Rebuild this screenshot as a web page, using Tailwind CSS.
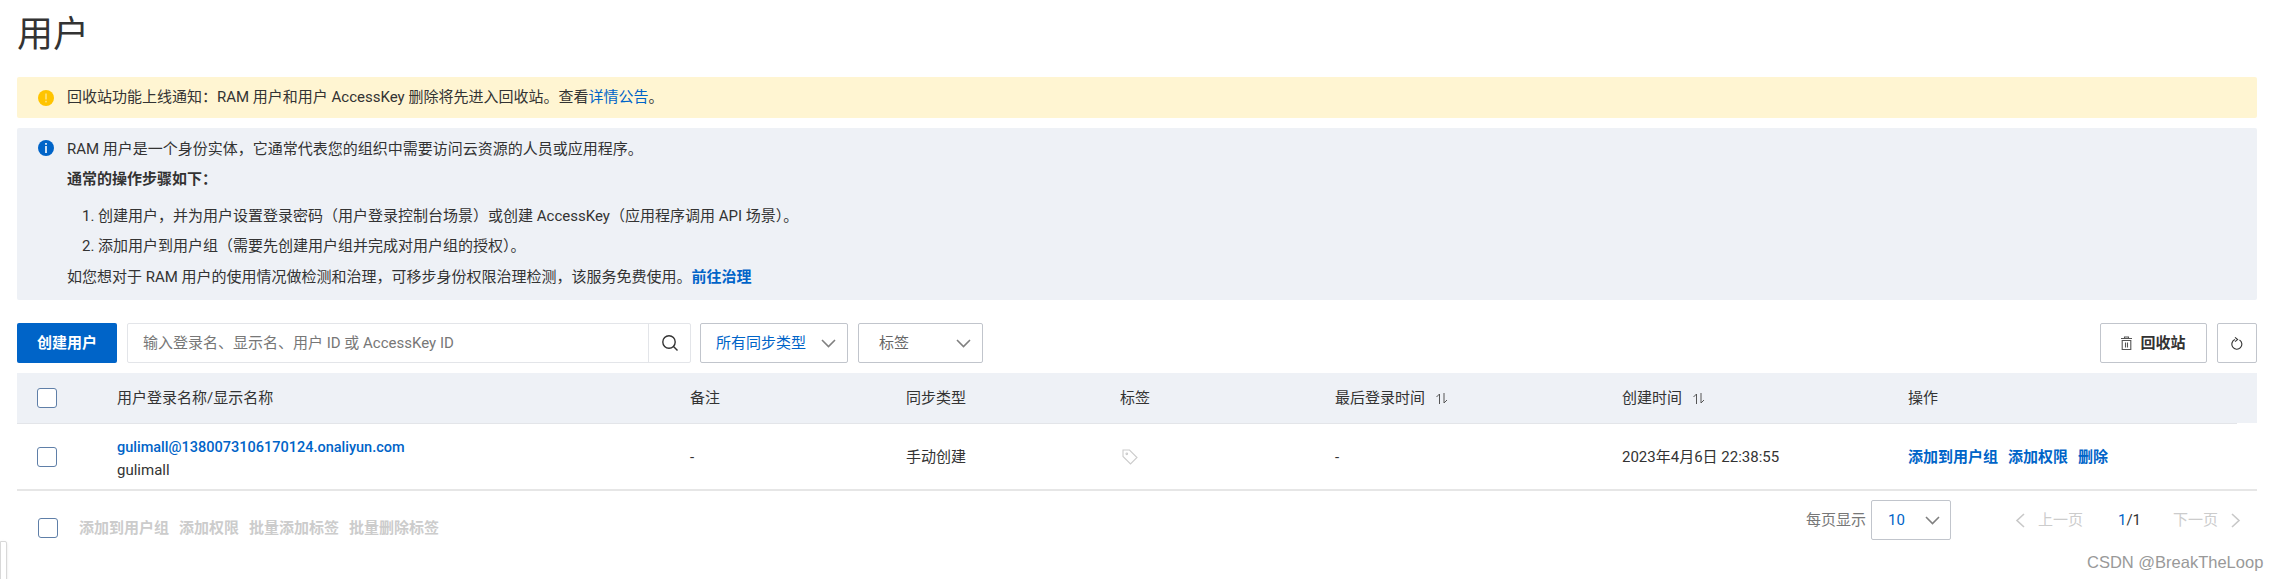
<!DOCTYPE html>
<html lang="zh-CN">
<head>
  <meta charset="UTF-8" />
  <title>用户</title>
  <script src="https://cdn.jsdelivr.net/npm/@tailwindcss/browser@4"></script>
</head>
<body class="bg-white h-[579px] overflow-hidden relative font-['Roboto','Noto_Sans_CJK_SC',sans-serif] text-[15px] text-[#333]">

  <div class="pl-[17px] pr-[23px]">
    <!-- title -->
    <h1 class="h-[77px] pt-[11px] text-[36px] leading-[48px] font-normal text-[#333]">用户</h1>

    <!-- recycle notice -->
    <div class="h-[41px] rounded-[2px] bg-[#fff5d2] pl-[21px] flex items-center gap-[13px]">
      <svg class="w-4 h-4 shrink-0" viewBox="0 0 16 16"><circle cx="8" cy="8" r="8" fill="#ffc400"/><rect x="7.2" y="3.5" width="1.6" height="6" fill="#ffe27a"/><rect x="7.2" y="10.8" width="1.6" height="1.6" fill="#ffe27a"/></svg>
      <p>回收站功能上线通知：RAM 用户和用户 AccessKey 删除将先进入回收站。查看<a class="text-[#0064c8]">详情公告</a>。</p>
    </div>

    <!-- intro -->
    <div class="mt-[10px] h-[172px] rounded-[2px] bg-[#eef1f6] pl-[21px] pt-[12px] flex gap-[13px]">
      <svg class="w-4 h-4 shrink-0" viewBox="0 0 16 16"><circle cx="8" cy="8" r="8" fill="#0064c8"/><rect x="7.2" y="3" width="1.6" height="1.8" fill="#fff"/><rect x="7.2" y="6" width="1.6" height="7" fill="#fff"/></svg>
      <div class="-mt-[2px]">
        <p class="leading-[22px]">RAM 用户是一个身份实体，它通常代表您的组织中需要访问云资源的人员或应用程序。</p>
        <p class="leading-[22px] mt-[8px] font-bold">通常的操作步骤如下：</p>
        <ol class="pl-[15px] mt-[15px] flex flex-col gap-[8px]">
          <li class="leading-[22px]">1. 创建用户，并为用户设置登录密码（用户登录控制台场景）或创建 AccessKey（应用程序调用 API 场景）。</li>
          <li class="leading-[22px]">2. 添加用户到用户组（需要先创建用户组并完成对用户组的授权）。</li>
        </ol>
        <p class="leading-[22px] mt-[9px]">如您想对于 RAM 用户的使用情况做检测和治理，可移步身份权限治理检测，该服务免费使用。<a class="text-[#0064c8] font-bold">前往治理</a></p>
      </div>
    </div>

    <!-- toolbar -->
    <div class="mt-[23px] h-[40px] flex items-stretch gap-[10px]">
      <button class="w-[100px] rounded-[2px] bg-[#0064c8] text-white font-bold">创建用户</button>
      <div class="w-[564px] flex border border-[#e3e5e9] rounded-[2px]">
        <div class="flex-1 pl-[15px] flex items-center text-[#777]">输入登录名、显示名、用户 ID 或 AccessKey ID</div>
        <div class="w-[42px] border-l border-[#e3e5e9] flex items-center justify-center">
          <svg class="w-[18px] h-[18px]" viewBox="0 0 18 18" fill="none" stroke="#333" stroke-width="1.4"><circle cx="8" cy="8" r="6.2"/><path d="M12.5 12.5 16.5 16.5"/></svg>
        </div>
      </div>
      <div class="-ml-px w-[148px] border border-[#c1c5cc] rounded-[2px] pl-[15px] pr-[11px] flex items-center justify-between text-[#0064c8]">
        <span>所有同步类型</span>
        <svg class="w-[15px] h-[9px]" viewBox="0 0 15 9" fill="none" stroke="#808080" stroke-width="1.6"><path d="M1 1 7.5 7.5 14 1"/></svg>
      </div>
      <div class="w-[125px] border border-[#c1c5cc] rounded-[2px] pl-[20px] pr-[11px] flex items-center justify-between text-[#666]">
        <span>标签</span>
        <svg class="w-[15px] h-[9px]" viewBox="0 0 15 9" fill="none" stroke="#808080" stroke-width="1.6"><path d="M1 1 7.5 7.5 14 1"/></svg>
      </div>
      <div class="ml-auto w-[107px] border border-[#c1c5cc] rounded-[2px] flex items-center justify-center gap-[8px] font-bold">
        <svg class="w-[11px] h-[14px]" viewBox="0 0 11 14" fill="none" stroke="#555" stroke-width="1.1"><path d="M0 2.5h11M3.5 2.5V1h4v1.5M1.2 4.5h8.6v9H1.2zM4.5 6.5v5M6.5 6.5v5"/></svg>
        <span>回收站</span>
      </div>
      <div class="w-[40px] border border-[#c1c5cc] rounded-[2px] flex items-center justify-center">
        <svg class="w-[12px] h-[13px]" viewBox="0 0 12 13" fill="none" stroke="#333" stroke-width="1.1"><path d="M8.5 3A5 5 0 1 1 4 2.6"/><path d="M4 .4 6.6 2.6 4 4.6" /></svg>
      </div>
    </div>

    <!-- table head -->
    <div class="mt-[10px] h-[50px] bg-[#eef1f6] grid grid-cols-[100px_573px_216px_214px_215px_287px_286px_1fr] items-center">
      <span class="ml-[20px] w-5 h-5 bg-white border border-[#5f7fa8] rounded-[3px]"></span>
      <span>用户登录名称/显示名称</span>
      <span>备注</span>
      <span>同步类型</span>
      <span>标签</span>
      <span class="flex items-center gap-[11px]">最后登录时间
        <svg class="w-[12px] h-[11px]" viewBox="0 0 12 11" fill="none" stroke="#555"><path d="M3.5 11V1L.5 4M8 0v10l3-3"/></svg>
      </span>
      <span class="flex items-center gap-[11px]">创建时间
        <svg class="w-[12px] h-[11px]" viewBox="0 0 12 11" fill="none" stroke="#555"><path d="M3.5 11V1L.5 4M8 0v10l3-3"/></svg>
      </span>
      <span>操作</span>
    </div>
    <div class="h-px w-[2220px] bg-[#e3e5e9]"></div>

    <!-- row -->
    <div class="h-[67px] border-b-2 border-[#e6e6e6] grid grid-cols-[100px_573px_216px_214px_215px_287px_286px_1fr] items-center">
      <span class="ml-[20px] w-5 h-5 border border-[#5f7fa8] rounded-[3px]"></span>
      <div class="flex flex-col pt-[5px]">
        <a class="text-[#0064c8] font-medium text-[14.5px] leading-[23px]">gulimall@1380073106170124.onaliyun.com</a>
        <span class="leading-[23px]">gulimall</span>
      </div>
      <span class="pt-[2px]">-</span>
      <span class="pt-[2px]">手动创建</span>
      <svg class="ml-[2px] w-4 h-4" viewBox="0 0 16 16" fill="none" stroke="#ccc" stroke-width="1.1"><path d="M1 1h6.5l7.5 7.5-6.5 6.5L1 7.5z"/><circle cx="4.8" cy="4.8" r=".8"/></svg>
      <span class="pt-[2px]">-</span>
      <span class="pt-[2px]">2023年4月6日 22:38:55</span>
      <div class="pt-[2px] flex gap-[10px] text-[#0064c8] font-bold">
        <a>添加到用户组</a><a>添加权限</a><a>删除</a>
      </div>
    </div>

    <!-- footer -->
    <div class="h-[50px] flex items-start">
      <div class="flex items-center h-[20px] mt-[27px]">
        <span class="ml-[21px] w-5 h-5 border border-[#5f7fa8] rounded-[3px]"></span>
        <div class="ml-[21px] flex gap-[10px] text-[#cccccc] font-bold">
          <span>添加到用户组</span><span>添加权限</span><span>批量添加标签</span><span>批量删除标签</span>
        </div>
      </div>
      <div class="ml-auto mr-[16px] mt-[9px] h-[40px] flex items-center">
        <span class="text-[#777] mr-[5px]">每页显示</span>
        <div class="w-[80px] h-[40px] border border-[#c1c5cc] rounded-[2px] pl-[16px] pr-[10px] flex items-center justify-between text-[#0064c8]">
          <span>10</span>
          <svg class="w-[15px] h-[9px]" viewBox="0 0 15 9" fill="none" stroke="#808080" stroke-width="1.6"><path d="M1 1 7.5 7.5 14 1"/></svg>
        </div>
        <svg class="ml-[64px] w-[10px] h-[15px]" viewBox="0 0 10 15" fill="none" stroke="#c8c8c8" stroke-width="1.6"><path d="M9 1 2 7.5 9 14"/></svg>
        <span class="ml-[13px] text-[#cccccc]">上一页</span>
        <span class="ml-[35px] w-[20px]"><span class="text-[#0064c8]">1</span>/1</span>
        <span class="ml-[35px] text-[#cccccc]">下一页</span>
        <svg class="ml-[13px] w-[10px] h-[15px]" viewBox="0 0 10 15" fill="none" stroke="#c8c8c8" stroke-width="1.6"><path d="M1 1 8 7.5 1 14"/></svg>
      </div>
    </div>
  </div>

  <!-- collapsed side handle, bottom left -->
  <div class="absolute left-0 top-[541px] w-[7px] h-[40px] bg-white border border-[#d8d8d8] rounded-tr-[2px] shadow-sm"></div>

  <!-- watermark -->
  <div class="absolute left-[2087px] top-[550px] font-['Liberation_Sans',sans-serif] text-[16.5px] leading-[24px] text-[#999]">CSDN @BreakTheLoop</div>

</body>
</html>
